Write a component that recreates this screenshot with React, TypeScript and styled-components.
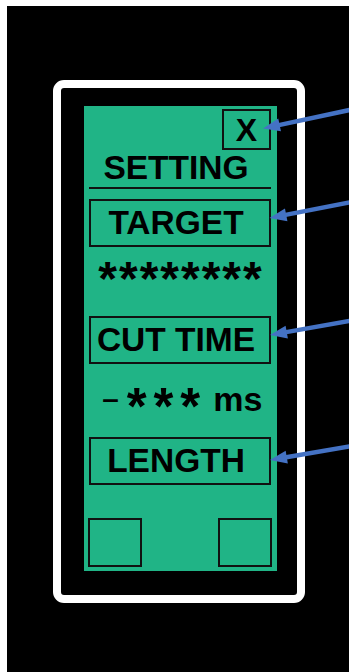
import styled, { createGlobalStyle } from 'styled-components';

const GlobalStyle = createGlobalStyle`
  html, body {
    margin: 0;
    padding: 0;
    background: #ffffff;
  }
  body {
    font-family: "Liberation Sans", Arial, sans-serif;
  }
`;

const Stage = styled.div`
  position: relative;
  margin: 6px 0 0 7px;
  height: 666px;
  background: #000;
  padding: 74px 0 0 46px;
  box-sizing: border-box;
  overflow: hidden;
`;

const Frame = styled.div`
  width: 252px;
  height: 523px;
  box-sizing: border-box;
  border: 8px solid #fff;
  border-radius: 11px;
  background: #000;
  padding: 18px 20px 24px 23px;
`;

const Panel = styled.div`
  height: 100%;
  background: #20b486;
  padding: 3px 6px 0 5px;
  box-sizing: border-box;
  display: flex;
  flex-direction: column;
  font-weight: 700;
  color: #000;
`;

const CloseRow = styled.div`
  display: flex;
  justify-content: flex-end;
`;

const CloseBox = styled.div`
  width: 49px;
  height: 41px;
  box-sizing: border-box;
  border: 2px solid #111;
  display: flex;
  align-items: center;
  justify-content: center;
  font-size: 32px;
  line-height: 32px;
  padding-top: 1px;
`;

const Title = styled.div`
  margin-top: 2px;
  font-size: 33.5px;
  line-height: 32px;
  text-align: center;
  padding-right: 8px;
`;

const Rule = styled.div`
  margin-top: 3px;
  height: 2px;
  background: #111;
`;

const LabelBox = styled.div<{ $top: number }>`
  margin-top: ${({ $top }) => $top}px;
  height: 48px;
  box-sizing: border-box;
  border: 2px solid #111;
  display: flex;
  align-items: center;
  justify-content: center;
  font-size: 33.5px;
  line-height: 32px;
  padding-right: 8px;
`;

const Stars = styled.div`
  margin-top: 8px;
  height: 40px;
  font-size: 48px;
  line-height: 48px;
  letter-spacing: 2px;
  text-align: center;
  padding-left: 2px;
`;

const ValueRow = styled.div`
  margin-top: 15px;
  height: 40px;
  display: flex;
  align-items: center;
  justify-content: center;
  font-size: 34px;
  line-height: 32px;
  padding-left: 5px;
`;

const Dash = styled.span`
  font-size: 27px;
  margin-right: 9px;
  transform: scaleX(1.1);
`;

const BigStars = styled.span`
  font-size: 51px;
  letter-spacing: 7px;
  line-height: 32px;
  padding-top: 16px;
  margin-right: 6px;
`;

const SquareRow = styled.div`
  margin-top: 33px;
  display: flex;
  justify-content: space-between;
  margin-left: -1px;
  margin-right: -1px;
`;

const Square = styled.div`
  width: 54px;
  height: 49px;
  box-sizing: border-box;
  border: 2px solid #111;
`;

const Arrows = styled.svg`
  position: absolute;
  left: -7px;
  top: -6px;
  width: 349px;
  height: 672px;
  pointer-events: none;
`;

type Arrow = { x1: number; y1: number; x2: number; y2: number };

const arrows: Arrow[] = [
  { x1: 352, y1: 109.5, x2: 263, y2: 128.5 },
  { x1: 352, y1: 202, x2: 269.5, y2: 218 },
  { x1: 352, y1: 320.5, x2: 270, y2: 335 },
  { x1: 352, y1: 446, x2: 270, y2: 460 },
];

const ArrowShape = ({ x1, y1, x2, y2 }: Arrow) => {
  const dx = x2 - x1;
  const dy = y2 - y1;
  const len = Math.hypot(dx, dy);
  const ux = dx / len;
  const uy = dy / len;
  const head = 17;
  const half = 6.5;
  const bx = x2 - ux * head;
  const by = y2 - uy * head;
  const nx = -uy * half;
  const ny = ux * half;
  return (
    <g>
      <line x1={x1} y1={y1} x2={bx + ux * 2} y2={by + uy * 2} stroke="#4472c4" strokeWidth={4.5} />
      <polygon
        points={`${x2},${y2} ${bx + nx},${by + ny} ${bx - nx},${by - ny}`}
        fill="#4472c4"
      />
    </g>
  );
};

const App = () => {
  return (
    <>
      <GlobalStyle />
      <Stage>
        <Frame>
          <Panel>
            <CloseRow>
              <CloseBox>X</CloseBox>
            </CloseRow>
            <Title>SETTING</Title>
            <Rule />
            <LabelBox $top={10}>TARGET</LabelBox>
            <Stars>********</Stars>
            <LabelBox $top={21}>CUT TIME</LabelBox>
            <ValueRow>
              <Dash>–</Dash>
              <BigStars>***</BigStars>
              ms
            </ValueRow>
            <LabelBox $top={18}>LENGTH</LabelBox>
            <SquareRow>
              <Square />
              <Square />
            </SquareRow>
          </Panel>
        </Frame>
        <Arrows viewBox="0 0 349 672">
          {arrows.map((a, i) => (
            <ArrowShape key={i} {...a} />
          ))}
        </Arrows>
      </Stage>
    </>
  );
};

export default App;
